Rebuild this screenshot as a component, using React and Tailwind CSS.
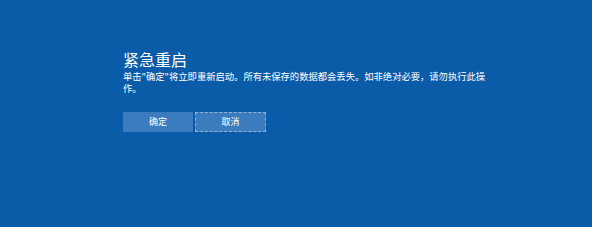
export default function App() {
  const font = {
    fontFamily: '"Microsoft YaHei", "Noto Sans CJK SC", sans-serif',
  };

  return (
    <div
      className="w-[592px] h-[227px] bg-[#0b5ca8] text-white overflow-hidden"
      style={font}
    >
      <div className="pl-[123px] pt-[51px]">
        <h1 className="text-[16px] leading-[17px] font-normal">紧急重启</h1>
        <p className="text-[9.3px] leading-[12px] w-[370px] mt-[2px]">
          单击"确定"将立即重新启动。所有未保存的数据都会丢失。如非绝对必要，请勿执行此操作。
        </p>

        <div className="flex gap-[2px] mt-[18px]">
          <button className="w-[70px] h-[20px] bg-[#3a7cbd] text-[9px] text-white">
            确定
          </button>
          <button className="w-[71px] h-[20px] bg-[#3a7cbd] text-[9px] text-white border border-dashed border-[#8fb3d8]">
            取消
          </button>
        </div>
      </div>
    </div>
  );
}
